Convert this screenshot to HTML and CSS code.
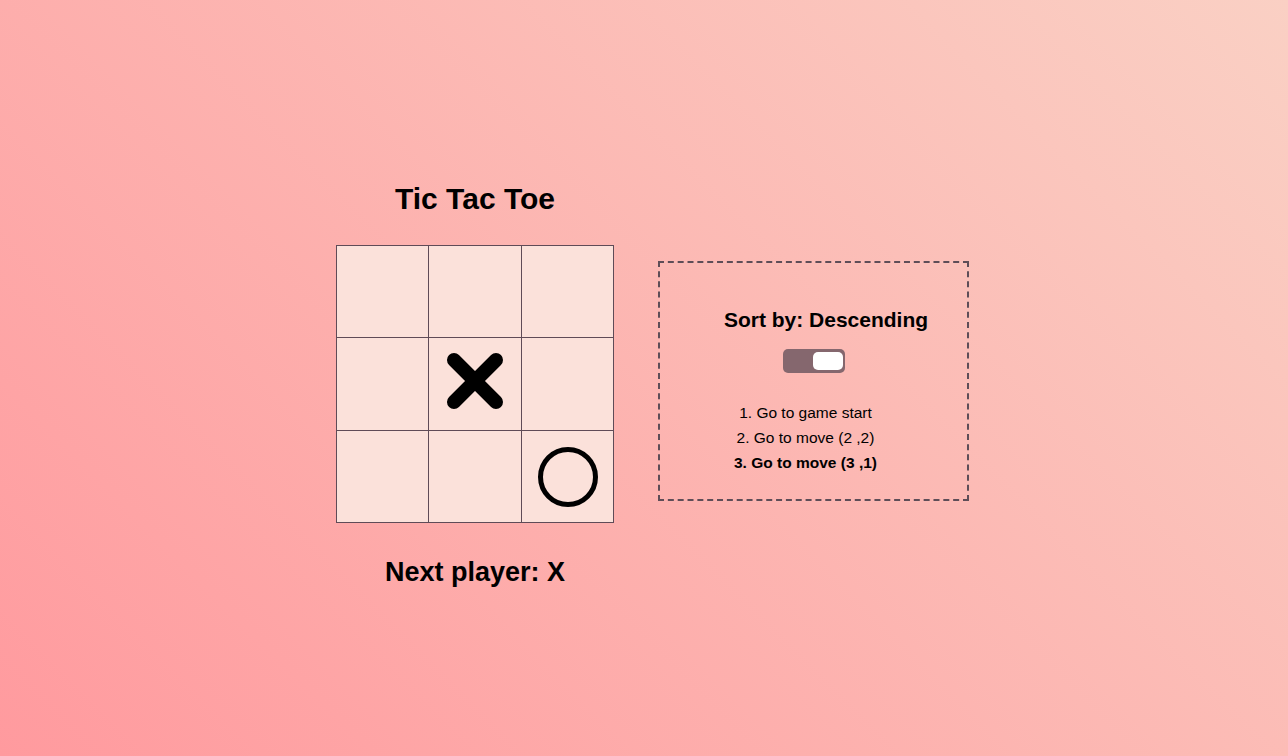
FILE: index.html
```html
<!DOCTYPE html>
<html lang="en">
<head>
<meta charset="utf-8">
<title>Tic Tac Toe</title>
<link rel="stylesheet" href="styles.css">
</head>
<body>
<main class="page">
  <section class="game">
    <h1 class="title">Tic Tac Toe</h1>
    <div class="board">
      <div class="cell"></div>
      <div class="cell"></div>
      <div class="cell"></div>
      <div class="cell"></div>
      <div class="cell">
        <svg class="mark-x" width="58" height="58" viewBox="0 0 58 58">
          <line x1="8" y1="8" x2="50" y2="50" stroke="#000" stroke-width="14" stroke-linecap="round"/>
          <line x1="50" y1="8" x2="8" y2="50" stroke="#000" stroke-width="14" stroke-linecap="round"/>
        </svg>
      </div>
      <div class="cell"></div>
      <div class="cell"></div>
      <div class="cell"></div>
      <div class="cell">
        <svg class="mark-o" width="62" height="62" viewBox="0 0 62 62">
          <circle cx="31" cy="31" r="27.5" fill="none" stroke="#000" stroke-width="5"/>
        </svg>
      </div>
    </div>
    <p class="status">Next player: X</p>
  </section>
  <aside class="history">
    <h2 class="sort-label">Sort by: Descending</h2>
    <div class="toggle"><span class="knob"></span></div>
    <ol class="moves">
      <li>Go to game start</li>
      <li>Go to move (2 ,2)</li>
      <li class="current">Go to move (3 ,1)</li>
    </ol>
  </aside>
</main>
</body>
</html>
```

FILE: styles.css
```css
html, body {
  margin: 0;
  padding: 0;
  height: 100%;
}

body {
  background: linear-gradient(45deg, #ff9a9e 0%, #fad0c4 100%);
  font-family: "Liberation Sans", Arial, sans-serif;
  color: #000;
}

.page {
  min-height: 100vh;
  box-sizing: border-box;
  display: flex;
  justify-content: center;
  align-items: center;
  gap: 44px;
  padding-left: 17px;
  padding-top: 12px;
}

.game {
  display: flex;
  flex-direction: column;
  align-items: center;
}

.title {
  margin: 0 0 28px;
  font-size: 30px;
  line-height: 36px;
  font-weight: bold;
}

.board {
  display: grid;
  grid-template-columns: 91px 92px 91px;
  grid-template-rows: 91px 92px 91px;
  gap: 1px;
  padding: 1px;
  background: #5f4b57;
}

.cell {
  background: #fbe1da;
  display: flex;
  align-items: center;
  justify-content: center;
}

.mark-x {
  margin-bottom: 6px;
}

.status {
  margin: 34px 0 0;
  font-size: 27px;
  line-height: 30px;
  font-weight: bold;
}

.history {
  width: 311px;
  height: 240px;
  box-sizing: border-box;
  border: 2px dashed #5e4d57;
  padding-top: 45px;
  display: flex;
  flex-direction: column;
  align-items: center;
  margin-top: -7px;
}

.sort-label {
  margin: 0;
  padding-left: 25px;
  font-size: 21px;
  line-height: 24px;
  font-weight: bold;
}

.toggle {
  margin-top: 17px;
  width: 62px;
  height: 24px;
  box-sizing: border-box;
  padding: 3px 2px 3px 30px;
  border-radius: 5px;
  background: #85676e;
}

.knob {
  display: block;
  width: 30px;
  height: 18px;
  border-radius: 5px;
  background: #fff;
}

.moves {
  margin: 27px 0 0;
  padding: 0 16px 0 0;
  list-style-position: inside;
  text-align: center;
  font-size: 15.5px;
  line-height: 25px;
}

.moves .current {
  font-weight: bold;
}
```
